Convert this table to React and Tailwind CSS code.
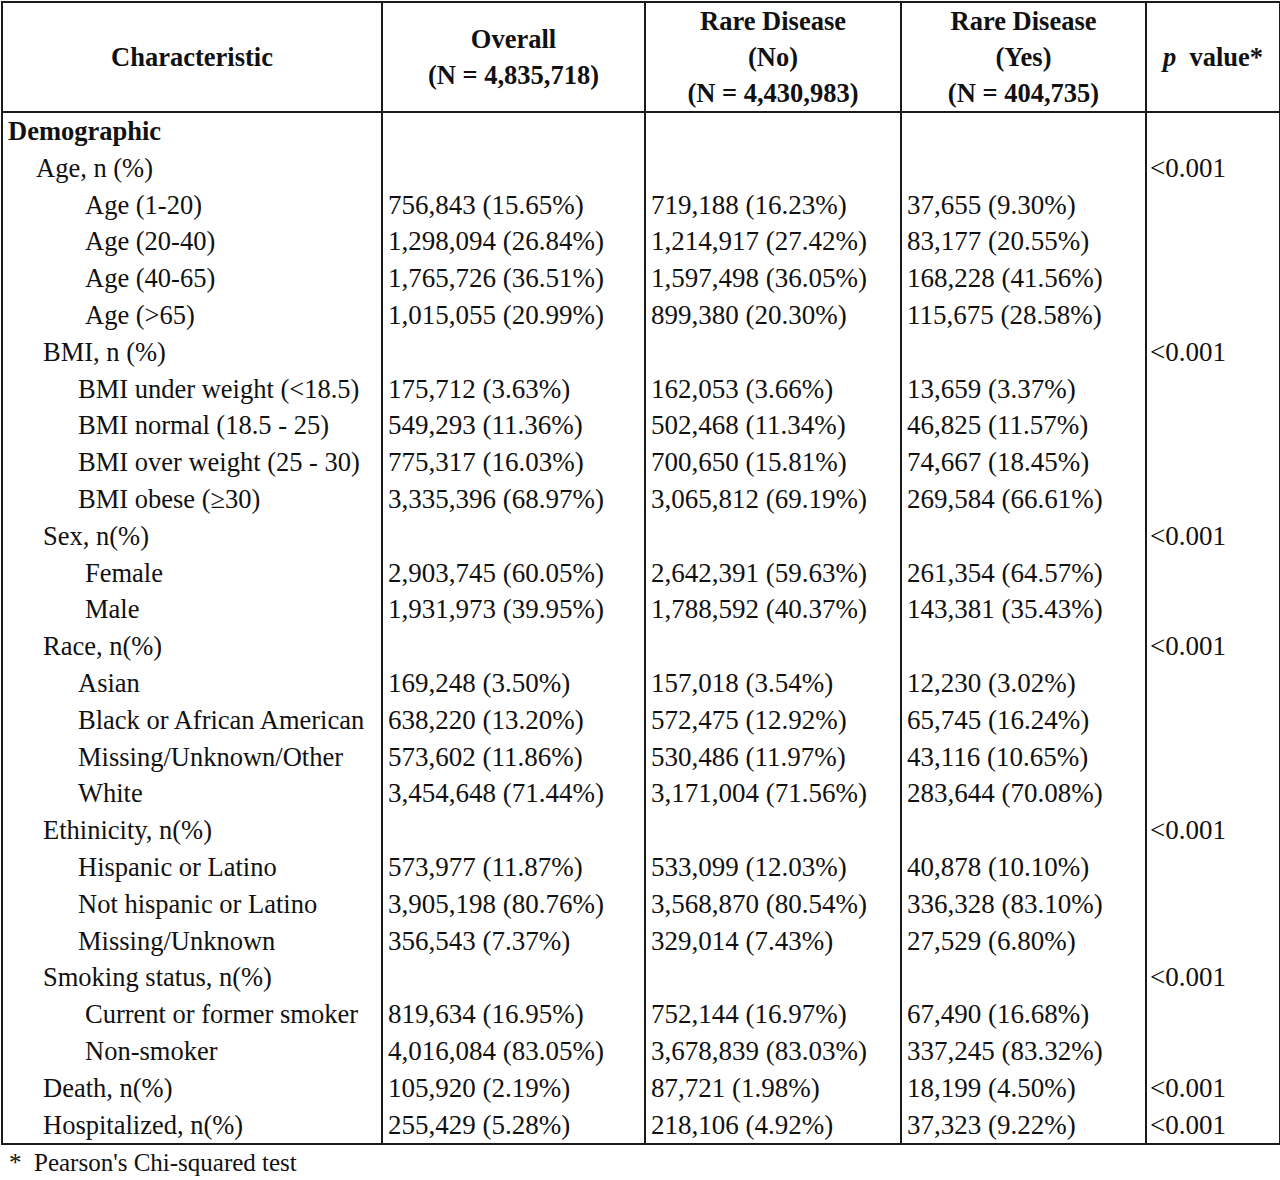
const rows = [
  { label: 'Demographic', indent: 'pl-[5px]', bold: true },
  { label: 'Age, n (%)', indent: 'pl-[33px]', p: '<0.001' },
  { label: 'Age (1-20)', indent: 'pl-[82px]', v: ['756,843 (15.65%)', '719,188 (16.23%)', '37,655 (9.30%)'] },
  { label: 'Age (20-40)', indent: 'pl-[82px]', v: ['1,298,094 (26.84%)', '1,214,917 (27.42%)', '83,177 (20.55%)'] },
  { label: 'Age (40-65)', indent: 'pl-[82px]', v: ['1,765,726 (36.51%)', '1,597,498 (36.05%)', '168,228 (41.56%)'] },
  { label: 'Age (>65)', indent: 'pl-[82px]', v: ['1,015,055 (20.99%)', '899,380 (20.30%)', '115,675 (28.58%)'] },
  { label: 'BMI, n (%)', indent: 'pl-[40px]', p: '<0.001' },
  { label: 'BMI under weight (<18.5)', indent: 'pl-[75px]', v: ['175,712 (3.63%)', '162,053 (3.66%)', '13,659 (3.37%)'] },
  { label: 'BMI normal (18.5 - 25)', indent: 'pl-[75px]', v: ['549,293 (11.36%)', '502,468 (11.34%)', '46,825 (11.57%)'] },
  { label: 'BMI over weight (25 - 30)', indent: 'pl-[75px]', v: ['775,317 (16.03%)', '700,650 (15.81%)', '74,667 (18.45%)'] },
  { label: 'BMI obese (≥30)', indent: 'pl-[75px]', v: ['3,335,396 (68.97%)', '3,065,812 (69.19%)', '269,584 (66.61%)'] },
  { label: 'Sex, n(%)', indent: 'pl-[40px]', p: '<0.001' },
  { label: 'Female', indent: 'pl-[82px]', v: ['2,903,745 (60.05%)', '2,642,391 (59.63%)', '261,354 (64.57%)'] },
  { label: 'Male', indent: 'pl-[82px]', v: ['1,931,973 (39.95%)', '1,788,592 (40.37%)', '143,381 (35.43%)'] },
  { label: 'Race, n(%)', indent: 'pl-[40px]', p: '<0.001' },
  { label: 'Asian', indent: 'pl-[75px]', v: ['169,248 (3.50%)', '157,018 (3.54%)', '12,230 (3.02%)'] },
  { label: 'Black or African American', indent: 'pl-[75px]', v: ['638,220 (13.20%)', '572,475 (12.92%)', '65,745 (16.24%)'] },
  { label: 'Missing/Unknown/Other', indent: 'pl-[75px]', v: ['573,602 (11.86%)', '530,486 (11.97%)', '43,116 (10.65%)'] },
  { label: 'White', indent: 'pl-[75px]', v: ['3,454,648 (71.44%)', '3,171,004 (71.56%)', '283,644 (70.08%)'] },
  { label: 'Ethinicity, n(%)', indent: 'pl-[40px]', p: '<0.001' },
  { label: 'Hispanic or Latino', indent: 'pl-[75px]', v: ['573,977 (11.87%)', '533,099 (12.03%)', '40,878 (10.10%)'] },
  { label: 'Not hispanic or Latino', indent: 'pl-[75px]', v: ['3,905,198 (80.76%)', '3,568,870 (80.54%)', '336,328 (83.10%)'] },
  { label: 'Missing/Unknown', indent: 'pl-[75px]', v: ['356,543 (7.37%)', '329,014 (7.43%)', '27,529 (6.80%)'] },
  { label: 'Smoking status, n(%)', indent: 'pl-[40px]', p: '<0.001' },
  { label: 'Current or former smoker', indent: 'pl-[82px]', v: ['819,634 (16.95%)', '752,144 (16.97%)', '67,490 (16.68%)'] },
  { label: 'Non-smoker', indent: 'pl-[82px]', v: ['4,016,084 (83.05%)', '3,678,839 (83.03%)', '337,245 (83.32%)'] },
  { label: 'Death, n(%)', indent: 'pl-[40px]', v: ['105,920 (2.19%)', '87,721 (1.98%)', '18,199 (4.50%)'], p: '<0.001' },
  { label: 'Hospitalized, n(%)', indent: 'pl-[40px]', v: ['255,429 (5.28%)', '218,106 (4.92%)', '37,323 (9.22%)'], p: '<0.001' },
]

const cell = 'border-x-2 border-[#1a1a1a] h-[36.8px] p-0 leading-[36.8px] whitespace-nowrap align-middle'

export default function App() {
  return (
    <div className="bg-white min-h-[1180px] pt-px pl-px text-[#111] font-['Liberation_Serif','Times_New_Roman',serif] text-[26.5px]">
      <table className="table-fixed border-collapse border-2 border-[#1a1a1a] w-[1278px]">
        <colgroup>
          <col className="w-[380px]" />
          <col className="w-[263px]" />
          <col className="w-[256px]" />
          <col className="w-[245px]" />
          <col className="w-[134px]" />
        </colgroup>
        <thead>
          <tr className="h-[108px] border-b-2 border-[#1a1a1a] font-bold text-center leading-[36px]">
            <th className="border-2 border-[#1a1a1a] p-0">Characteristic</th>
            <th className="border-2 border-[#1a1a1a] p-0">Overall<br />(N = 4,835,718)</th>
            <th className="border-2 border-[#1a1a1a] p-0">Rare Disease<br />(No)<br />(N = 4,430,983)</th>
            <th className="border-2 border-[#1a1a1a] p-0">Rare Disease<br />(Yes)<br />(N = 404,735)</th>
            <th className="border-2 border-[#1a1a1a] p-0"><i>p</i>&nbsp; value*</th>
          </tr>
        </thead>
        <tbody>
          {rows.map((r) => (
            <tr key={r.label}>
              <td className={`${cell} ${r.indent} ${r.bold ? 'font-bold' : ''}`}>{r.label}</td>
              <td className={`${cell} pl-[5px] text-[27px]`}>{r.v ? r.v[0] : ''}</td>
              <td className={`${cell} pl-[5px] text-[27px]`}>{r.v ? r.v[1] : ''}</td>
              <td className={`${cell} pl-[5px] text-[27px]`}>{r.v ? r.v[2] : ''}</td>
              <td className={`${cell} pl-[3px] text-[27px]`}>{r.p || ''}</td>
            </tr>
          ))}
        </tbody>
      </table>
      <div className="pl-[8px] leading-[36px] text-[25px]">*&nbsp; Pearson's Chi-squared test</div>
    </div>
  )
}
